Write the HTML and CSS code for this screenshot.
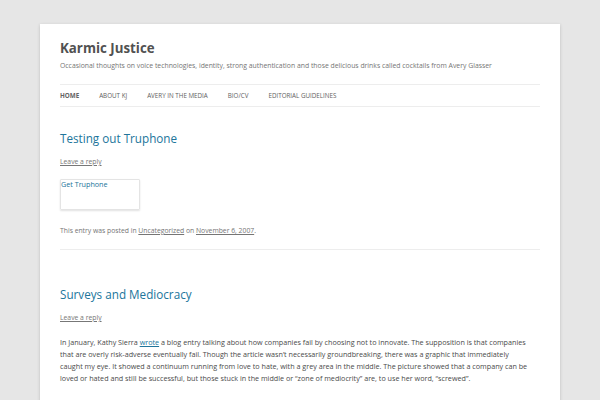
FILE: index.html
```html
<!DOCTYPE html>
<html>
<head>
<meta charset="utf-8">
<link rel="stylesheet" href="styles.css">
</head>
<body>
<div class="site">
  <header class="site-header">
    <h1 class="site-title">Karmic Justice</h1>
    <p class="site-description">Occasional thoughts on voice technologies, identity, strong authentication and those delicious drinks called cocktails from Avery Glasser</p>
    <nav class="main-nav">
      <a class="nav-item current">Home</a>
      <a class="nav-item">About KJ</a>
      <a class="nav-item">Avery in the Media</a>
      <a class="nav-item">Bio/CV</a>
      <a class="nav-item">Editorial Guidelines</a>
    </nav>
  </header>
  <main class="content">
    <article class="post first">
      <h2 class="entry-title">Testing out Truphone</h2>
      <a class="reply">Leave a reply</a>
      <div class="embed-box"><span class="embed-link">Get Truphone</span></div>
      <p class="entry-meta">This entry was posted in <a class="meta-link">Uncategorized</a> on <a class="meta-link">November 6, 2007</a>.</p>
    </article>
    <article class="post second">
      <h2 class="entry-title">Surveys and Mediocracy</h2>
      <a class="reply">Leave a reply</a>
      <p class="entry-text">In January, Kathy Sierra <a class="inline-link">wrote</a> a blog entry talking about how companies fail by choosing not to innovate. The supposition is that companies that are overly risk-adverse eventually fail. Though the article wasn’t necessarily groundbreaking, there was a graphic that immediately caught my eye. It showed a continuum running from love to hate, with a grey area in the middle. The picture showed that a company can be loved or hated and still be successful, but those stuck in the middle or “zone of mediocrity” are, to use her word, “screwed”.</p>
      <p class="entry-text">While a cold and rational look at such a concept is always risky, I wanted to examine some of the assumptions in this and how they apply to the world of surveys and customer research in general.</p>
    </article>
  </main>
</div>
</body>
</html>
```

FILE: styles.css
```css
html, body {
  margin: 0;
  padding: 0;
}
body {
  background: #e6e6e6;
  font-family: "Open Sans", "Liberation Sans", sans-serif;
  color: #444;
  height: 400px;
  overflow: hidden;
}
.site {
  margin: 24px 40px 0;
  padding: 0 20px;
  background: #fff;
  box-shadow: 0 1px 3px rgba(100, 100, 100, 0.3);
  min-height: 400px;
}
.site-header {
  padding-top: 15px;
}
.site-title {
  margin: 0;
  font-size: 13.3px;
  line-height: 18px;
  font-weight: 700;
  color: #515151;
}
.site-description {
  margin: 3px 0 0;
  font-size: 6.85px;
  line-height: 12px;
  color: #757575;
}
.main-nav {
  margin-top: 12px;
  border-top: 1px solid #ededed;
  border-bottom: 1px solid #ededed;
  height: 21px;
  display: flex;
  align-items: center;
  gap: 20px;
}
.nav-item {
  font-size: 6.25px;
  text-transform: uppercase;
  color: #5e5e5e;
  line-height: 10px;
}
.nav-item.current {
  font-weight: 700;
  color: #636363;
}
.content {
  padding-top: 23px;
}
.post {
  display: flex;
  flex-direction: column;
  align-items: flex-start;
}
.post.first {
  border-bottom: 1px solid #ededed;
  padding-bottom: 13px;
}
.post.second {
  padding-top: 36px;
}
.entry-title {
  margin: 0;
  font-size: 11.7px;
  line-height: 16px;
  font-weight: 400;
  color: #21759b;
}
.reply {
  margin-top: 11px;
  font-size: 6.8px;
  line-height: 10px;
  color: #777;
  text-decoration: underline;
}
.embed-box {
  margin-top: 12px;
  width: 78px;
  height: 29px;
  border: 1px solid #e4e4e4;
  box-shadow: 0 1px 2px rgba(0, 0, 0, 0.12);
  border-radius: 1px;
}
.embed-link {
  display: block;
  font-size: 7.2px;
  line-height: 8px;
  color: #21759b;
}
.entry-meta {
  margin: 16px 0 0;
  font-size: 6.8px;
  line-height: 10px;
  color: #757575;
}
.meta-link {
  color: #757575;
  text-decoration: underline;
}
.entry-text {
  margin: 13px 0 0;
  font-size: 7.2px;
  line-height: 12px;
  color: #4a4a4a;
  max-width: 472px;
}
.entry-text + .entry-text {
  margin-top: 12px;
}
.inline-link {
  color: #21759b;
  text-decoration: underline;
}
```
